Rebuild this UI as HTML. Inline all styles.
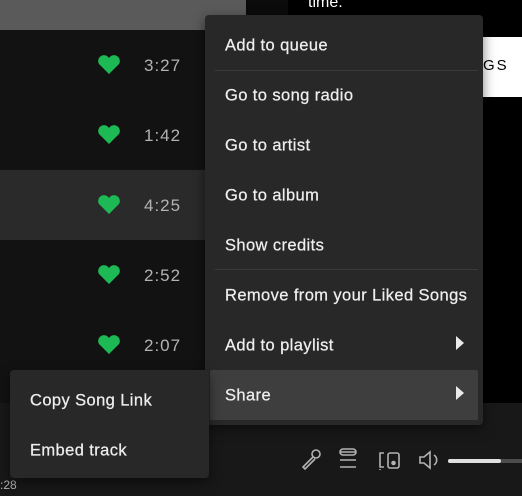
<!DOCTYPE html>
<html><head><style>
*{margin:0;padding:0;box-sizing:border-box}
body{width:522px;height:496px;overflow:hidden;background:#000;font-family:"Liberation Sans",sans-serif;position:relative}
.abs{position:absolute}
.row{position:absolute;left:0;width:246px;height:70px}
.menu{position:absolute;background:#282828;border-radius:4px;box-shadow:0 4px 12px rgba(0,0,0,.5)}
.it{position:absolute;left:20px;color:#eeeeee;font-size:16.5px;letter-spacing:0.4px;transform:translateY(-50%);margin-top:1px;-webkit-text-stroke:0.25px #eeeeee}
.sep{position:absolute;left:10px;right:5px;height:1px;background:#3a3a3a}
.tri{position:absolute;width:0;height:0;border-top:7px solid transparent;border-bottom:7px solid transparent;border-left:8px solid #eaeaea}
</style></head><body>
<div class="abs" style="left:0;top:0;width:246px;height:403px;background:#121212"></div>
<div class="abs" style="left:246px;top:0;width:42px;height:403px;background:#0b0b0b"></div>
<div class="row" style="top:-40px;background:#5a5a5a"></div>
<div class="row" style="top:170px;background:#2a2a2a"></div>
<div class="abs" style="left:308px;top:-6px;color:#fff;font-size:16px">time.</div>
<div class="abs" style="left:483px;top:37px;width:39px;height:60px;background:#fff"></div>
<div class="abs" style="left:483px;top:57px;color:#000;font-size:15px;letter-spacing:2px">GS</div>
<div class="abs" style="left:0;top:403px;width:522px;height:93px;background:#181818"></div>
<div class="abs" style="left:0;top:478px;color:#b3b3b3;font-size:12px">:28</div>
<svg class="abs" style="left:0;top:0" width="246" height="403">
<g fill="#1db954">
<path id="h" d="M109 -3 l-10 -10 a5.5 5.5 0 0 1 10 -6 a5.5 5.5 0 0 1 10 6z"/>
<use href="#h" y="77"/><use href="#h" y="147"/><use href="#h" y="217"/><use href="#h" y="287"/><use href="#h" y="357"/>
</g>
<g fill="#b3b3b3" font-family="Liberation Sans" font-size="17" letter-spacing="1">
<text x="144" y="71">3:27</text><text x="144" y="141">1:42</text><text x="144" y="211">4:25</text><text x="144" y="281">2:52</text><text x="144" y="351">2:07</text>
</g>
</svg>
<svg class="abs" style="left:290px;top:440px" width="232" height="40" fill="none" stroke="#b3b3b3" stroke-width="1.6">
<circle cx="26" cy="14" r="4"/><path d="M23 17 l-10 10 l2 2 l10 -10"/>
<path d="M50 12h16M50 20h16M50 27h16"/><rect x="50" y="9" width="16" height="6" rx="3"/>
<path d="M94 13h-4v14h4M90 29v1"/><rect x="98" y="13" width="11" height="15" rx="2"/><circle cx="103.5" cy="23" r="1.5" fill="#b3b3b3"/>
<path d="M130 17h4l6-5v16l-6-5h-4z M144 15a6 6 0 0 1 0 10"/>
<line x1="160" y1="21" x2="232" y2="21" stroke="#4d4d4d" stroke-width="4" stroke-linecap="round"/>
<line x1="160" y1="21" x2="209" y2="21" stroke="#e0e0e0" stroke-width="4" stroke-linecap="round"/>
</svg>
<div class="menu" style="left:205px;top:15px;width:278px;height:410px">
<div class="it" style="top:30px">Add to queue</div>
<div class="sep" style="top:55px"></div>
<div class="it" style="top:80px">Go to song radio</div>
<div class="it" style="top:130px">Go to artist</div>
<div class="it" style="top:180px">Go to album</div>
<div class="it" style="top:230px">Show credits</div>
<div class="sep" style="top:254px"></div>
<div class="it" style="top:280px">Remove from your Liked Songs</div>
<div class="it" style="top:330px">Add to playlist</div>
<div class="tri" style="left:251px;top:321px"></div>
<div class="abs" style="left:5px;top:355px;width:268px;height:50px;background:#3e3e3e;border-radius:2px"></div>
<div class="it" style="top:380px">Share</div>
<div class="tri" style="left:251px;top:371px"></div>
</div>
<div class="menu" style="left:10px;top:370px;width:199px;height:108px">
<div class="it" style="top:30px">Copy Song Link</div>
<div class="it" style="top:80px">Embed track</div>
</div>
</body></html>
